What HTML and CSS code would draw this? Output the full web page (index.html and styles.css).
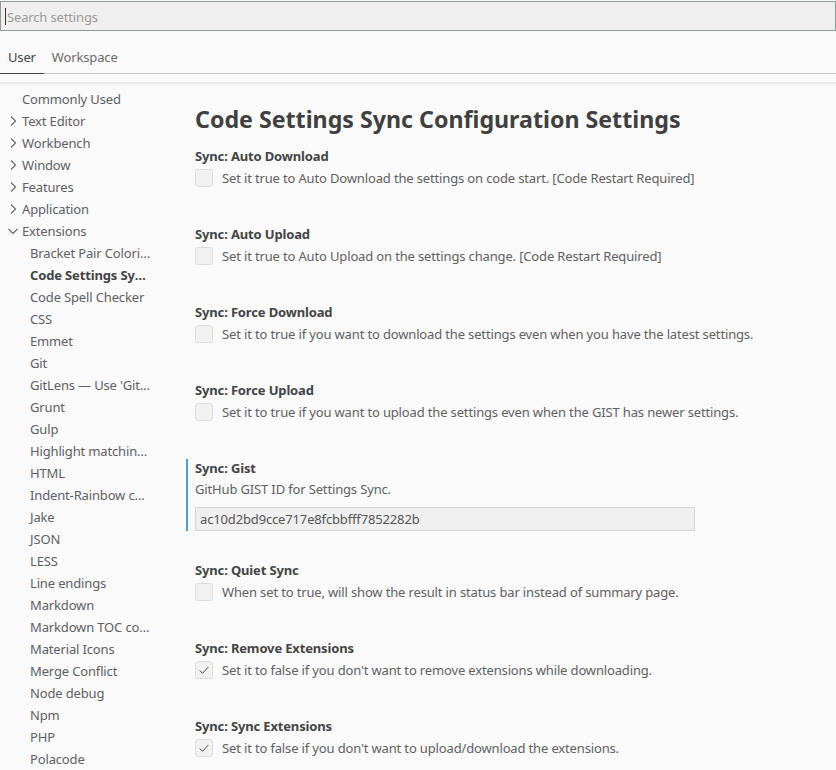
FILE: index.html
```html
<!DOCTYPE html>
<html>
<head>
<meta charset="utf-8">
<link rel="stylesheet" href="styles.css">
</head>
<body>
<div class="search">
  <span class="caret"></span><span class="placeholder">Search settings</span>
</div>
<div class="tabs">
  <div class="tab active">User</div>
  <div class="tab">Workspace</div>
</div>
<div class="body">
  <nav class="toc">
    <div class="toc-item l1 nochev">Commonly Used</div>
    <div class="toc-item l1"><svg class="chev" viewBox="0 0 16 16"><path d="M6 3.5 L10.5 8 L6 12.5"/></svg>Text Editor</div>
    <div class="toc-item l1"><svg class="chev" viewBox="0 0 16 16"><path d="M6 3.5 L10.5 8 L6 12.5"/></svg>Workbench</div>
    <div class="toc-item l1"><svg class="chev" viewBox="0 0 16 16"><path d="M6 3.5 L10.5 8 L6 12.5"/></svg>Window</div>
    <div class="toc-item l1"><svg class="chev" viewBox="0 0 16 16"><path d="M6 3.5 L10.5 8 L6 12.5"/></svg>Features</div>
    <div class="toc-item l1"><svg class="chev" viewBox="0 0 16 16"><path d="M6 3.5 L10.5 8 L6 12.5"/></svg>Application</div>
    <div class="toc-item l1"><svg class="chev" viewBox="0 0 16 16"><path d="M3.5 6 L8 10.5 L12.5 6"/></svg>Extensions</div>
    <div class="toc-item l2">Bracket Pair Colorizer</div>
    <div class="toc-item l2 current">Code Settings Sync</div>
    <div class="toc-item l2">Code Spell Checker</div>
    <div class="toc-item l2">CSS</div>
    <div class="toc-item l2">Emmet</div>
    <div class="toc-item l2">Git</div>
    <div class="toc-item l2">GitLens — Use 'GitLens: Open Settings'</div>
    <div class="toc-item l2">Grunt</div>
    <div class="toc-item l2">Gulp</div>
    <div class="toc-item l2">Highlight matching tag</div>
    <div class="toc-item l2">HTML</div>
    <div class="toc-item l2">Indent-Rainbow configuration</div>
    <div class="toc-item l2">Jake</div>
    <div class="toc-item l2">JSON</div>
    <div class="toc-item l2">LESS</div>
    <div class="toc-item l2">Line endings</div>
    <div class="toc-item l2">Markdown</div>
    <div class="toc-item l2">Markdown TOC configuration</div>
    <div class="toc-item l2">Material Icons</div>
    <div class="toc-item l2">Merge Conflict</div>
    <div class="toc-item l2">Node debug</div>
    <div class="toc-item l2">Npm</div>
    <div class="toc-item l2">PHP</div>
    <div class="toc-item l2">Polacode</div>
  </nav>
  <main class="settings">
    <h1 class="title">Code Settings Sync Configuration Settings</h1>

    <div class="item">
      <div class="label">Sync: Auto Download</div>
      <div class="row"><span class="cb"></span><span class="desc">Set it true to Auto Download the settings on code start. [Code Restart Required]</span></div>
    </div>

    <div class="item">
      <div class="label">Sync: Auto Upload</div>
      <div class="row"><span class="cb"></span><span class="desc">Set it true to Auto Upload on the settings change. [Code Restart Required]</span></div>
    </div>

    <div class="item">
      <div class="label">Sync: Force Download</div>
      <div class="row"><span class="cb"></span><span class="desc">Set it to true if you want to download the settings even when you have the latest settings.</span></div>
    </div>

    <div class="item">
      <div class="label">Sync: Force Upload</div>
      <div class="row"><span class="cb"></span><span class="desc">Set it to true if you want to upload the settings even when the GIST has newer settings.</span></div>
    </div>

    <div class="item text focused">
      <div class="label">Sync: Gist</div>
      <div class="desc block">GitHub GIST ID for Settings Sync.</div>
      <div class="input">ac10d2bd9cce717e8fcbbfff7852282b</div>
    </div>

    <div class="item">
      <div class="label">Sync: Quiet Sync</div>
      <div class="row"><span class="cb"></span><span class="desc">When set to true, will show the result in status bar instead of summary page.</span></div>
    </div>

    <div class="item">
      <div class="label">Sync: Remove Extensions</div>
      <div class="row"><span class="cb"><svg viewBox="0 0 16 16"><path d="M3 8.5 L6.3 11.8 L13 4.5"/></svg></span><span class="desc">Set it to false if you don't want to remove extensions while downloading.</span></div>
    </div>

    <div class="item">
      <div class="label">Sync: Sync Extensions</div>
      <div class="row"><span class="cb"><svg viewBox="0 0 16 16"><path d="M3 8.5 L6.3 11.8 L13 4.5"/></svg></span><span class="desc">Set it to false if you don't want to upload/download the extensions.</span></div>
    </div>
  </main>
</div>
</body>
</html>
```
FILE: styles.css
```css
html, body {
  margin: 0;
  padding: 0;
  background: #fafafa;
  height: 770px;
  overflow: hidden;
}
body {
  font-family: "Noto Sans", "Open Sans", sans-serif;
  font-size: 13px;
  letter-spacing: -0.15px;
  color: #616161;
}
.search {
  margin-top: 1px;
  height: 28px;
  border: 1px solid #8c9c96;
  background: #efefef;
  display: flex;
  align-items: center;
  padding-left: 4px;
  padding-top: 1px;
  box-sizing: content-box;
  height: 27px;
}
.caret {
  width: 1px;
  height: 17px;
  background: #333;
  margin-right: 1px;
}
.placeholder {
  color: #9a9a9a;
}
.tabs {
  display: flex;
  height: 42px;
  border-bottom: 1px solid #c8c8c8;
}
.tab {
  padding: 0 8px;
  display: flex;
  align-items: center;
  padding-top: 10px;
  color: #6b6b6b;
  box-sizing: border-box;
}
.tab.active {
  color: #444;
  border-bottom: 1px solid #444;
  margin-bottom: -1px;
}
.body {
  display: flex;
  margin-top: 8px;
  box-shadow: inset 0 6px 6px -6px rgba(0,0,0,0.15);
  padding-top: 6px;
}
.toc {
  width: 186px;
  flex: none;
}
.toc-item {
  height: 22px;
  line-height: 22px;
  white-space: nowrap;
  overflow: hidden;
  text-overflow: ellipsis;
  color: #5f5f66;
  box-sizing: border-box;
}
.toc-item.l1 {
  padding-left: 5px;
  display: flex;
  align-items: center;
  width: 160px;
}
.toc-item.l1.nochev {
  padding-left: 22px;
  display: block;
}
.chev {
  width: 16px;
  height: 16px;
  margin-right: 1px;
  fill: none;
  stroke: #666;
  stroke-width: 1.1;
}
.toc-item.l2 {
  padding-left: 30px;
  width: 152px;
}
.toc-item.current {
  font-weight: 700;
  color: #444;
  width: 149px;
}
.settings {
  flex: 1;
  min-width: 0;
}
.title {
  margin: 0;
  margin-top: 15px;
  font-size: 23.2px;
  letter-spacing: 0;
  line-height: 32px;
  font-weight: 700;
  color: #404040;
  padding-left: 9px;
}
.item {
  border-left: 2px solid transparent;
  padding-left: 7px;
  margin-top: 12px;
}
.item + .item {
  margin-top: 38px;
}
.item.text + .item {
  margin-top: 30px;
}
.item.focused {
  border-left-color: #4a9fdb;
}
.label {
  font-weight: 700;
  line-height: 18px;
  color: #444;
}
.row {
  display: flex;
  align-items: center;
  margin-top: 4px;
  height: 18px;
}
.cb {
  width: 16px;
  height: 16px;
  border: 1px solid #dcdcdc;
  background: #f1f1f1;
  border-radius: 3px;
  flex: none;
  margin-right: 9px;
  display: flex;
  align-items: center;
  justify-content: center;
}
.cb svg {
  width: 14px;
  height: 14px;
  fill: none;
  stroke: #444;
  stroke-width: 1.1;
}
.desc {
  line-height: 18px;
  white-space: nowrap;
}
.desc.block {
  margin-top: 3px;
}
.input {
  margin-top: 9px;
  width: 500px;
  height: 24px;
  box-sizing: border-box;
  border: 1px solid #d4d4d4;
  background: #efefef;
  line-height: 22px;
  padding-left: 4px;
  color: #555;
}
```
